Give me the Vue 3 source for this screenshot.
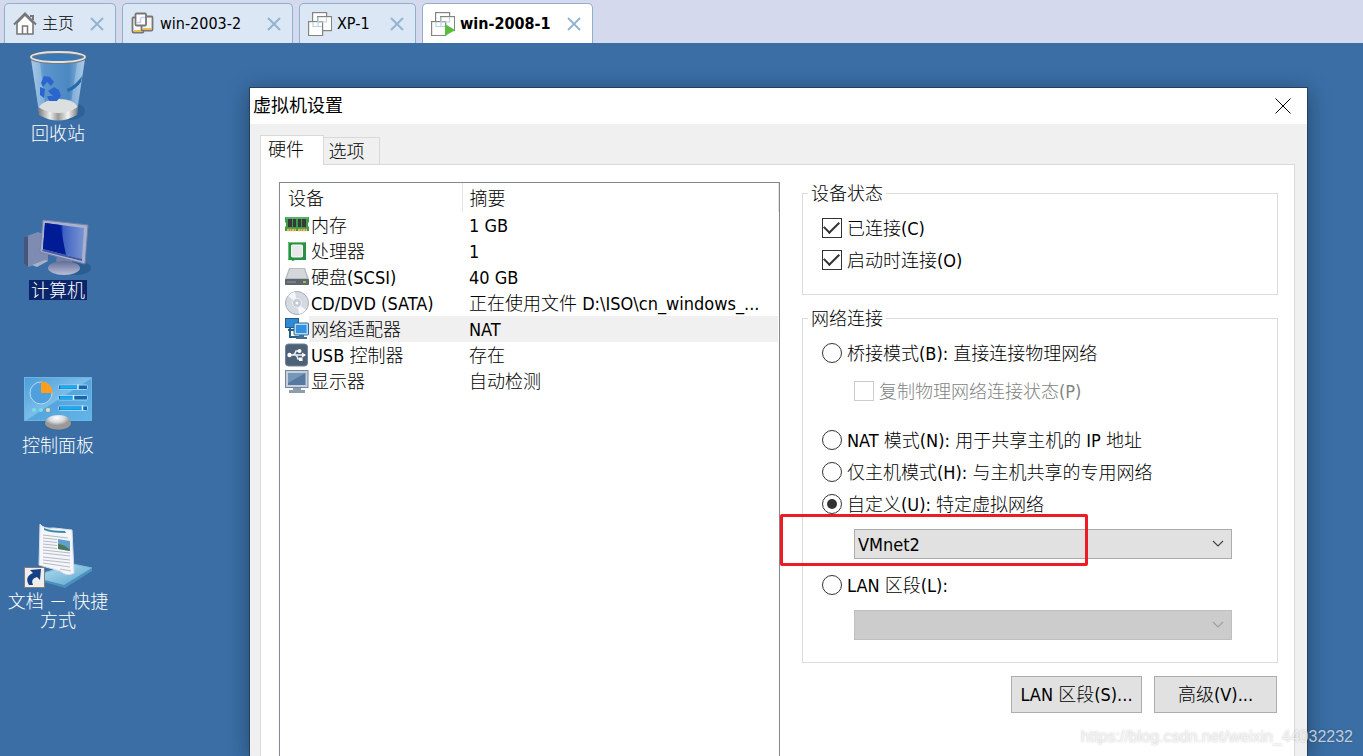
<script setup>
import { ref } from 'vue'

const tabs = [
  { icon: 'home', label: '主页', size: 'w-home' },
  { icon: 'team', label: 'win-2003-2', size: 'w-long' },
  { icon: 'vm', label: 'XP-1', size: 'w-short' },
  { icon: 'run', label: 'win-2008-1', size: 'w-long', active: true }
]

const devices = [
  { icon: 'memory', name: '内存', summary: '1 GB' },
  { icon: 'cpu', name: '处理器', summary: '1' },
  { icon: 'disk', name: '硬盘(SCSI)', summary: '40 GB' },
  { icon: 'cd', name: 'CD/DVD (SATA)', summary: '正在使用文件 D:\\ISO\\cn_windows_...' },
  { icon: 'net', name: '网络适配器', summary: 'NAT', selected: true },
  { icon: 'usb', name: 'USB 控制器', summary: '存在' },
  { icon: 'display', name: '显示器', summary: '自动检测' }
]

const connected = ref(true)
const connectAtStart = ref(true)
const replicate = ref(false)
const mode = ref('custom')
const vmnet = ref('VMnet2')
const lan = ref('')
</script>

<template>
  <div class="screen">
    <nav class="tabbar">
      <div v-for="t in tabs" :key="t.label" class="vtab" :class="[t.size, { active: t.active }]">
        <svg v-if="t.icon === 'home'" class="ticon" viewBox="0 0 24 24" fill="none" stroke="#777">
          <path d="M4 11V22H20V11L12 3Z" fill="#fff" stroke-width="1.6" />
          <path d="M1 12.500L12 1.500L23 12.500M17 4h3v4" stroke-width="2" />
          <path d="M9.500 22v-8h5v8" stroke-width="1.500" />
        </svg>
        <svg v-else-if="t.icon === 'team'" class="ticon" viewBox="0 0 24 24" stroke="#777" stroke-width="1.800">
          <rect x="1.500" y="5.500" width="11" height="15" rx="1" fill="#fff" />
          <path d="M3 19h9" stroke="#e6bc55" stroke-width="2" />
          <rect x="10.500" y="4.500" width="11" height="14" rx="1" fill="#f5f5f5" />
          <path d="M12 17h8.500" stroke="#e6bc55" stroke-width="2" />
          <rect x="4.500" y="1.500" width="10.500" height="12" rx="1" fill="#fff" />
          <path d="M5.500 10.500h4v-5M10 5.500h4" stroke="#c9cfea" fill="none" stroke-width="1.500" />
        </svg>
        <svg v-else class="ticon" viewBox="0 0 24 24" fill="none" stroke="#85857f" stroke-width="1.200">
          <rect x="4.600" y="0.600" width="14" height="14" fill="#fff" />
          <rect x="9.600" y="4.600" width="14" height="14" fill="#fff" />
          <rect x="0.600" y="9.600" width="14" height="14" fill="#fff" />
          <path d="M5 10v4.500h9M10 5v9.500M10 10h8.500V5" stroke="#bdd3e8" />
          <path v-if="t.icon === 'run'" d="M14 12L24 18L14 24Z" fill="#58bd3b" stroke="none" />
        </svg>
        <span class="tname">{{ t.label }}</span>
        <button class="tclose" :aria-label="'关闭 ' + t.label">
          <svg viewBox="0 0 14 14"><path d="M1 1L13 13M13 1L1 13" stroke="#8fb3d0" stroke-width="1.800" /></svg>
        </button>
      </div>
    </nav>

    <main class="desktop">
      <aside class="shortcuts">
        <div class="shortcut">
          <svg viewBox="0 51 116 72">
            <defs>
              <linearGradient id="glass"><stop offset="0" stop-color="#9fc6e8" /><stop offset=".25" stop-color="#5f9ad0" /><stop offset=".7" stop-color="#4d8ac5" /><stop offset="1" stop-color="#a5c9e6" /></linearGradient>
              <linearGradient id="metal"><stop offset="0" stop-color="#777" /><stop offset=".3" stop-color="#eee" /><stop offset=".5" stop-color="#999" /><stop offset=".75" stop-color="#f4f4f4" /><stop offset="1" stop-color="#777" /></linearGradient>
            </defs>
            <ellipse cx="70" cy="111" rx="15" ry="9" fill="#1f568d" opacity=".5" />
            <path d="M31 58L39 113Q58 122 77 113L85 58Z" fill="url(#glass)" opacity=".9" />
            <path d="M31 60L39 110L46 112L40 62ZM77 63L70 110L77 108L85 60Z" fill="#c8e0f3" opacity=".35" />
            <path d="M67 89Q76 85 82 76L81 82Q76 89 68 92Z" fill="#2868ac" />
            <path d="M39 107Q45 99 59 99T77 106L76 112Q58 120 40 112Z" fill="#dcdfe0" />
            <path d="M38 107Q58 119 78 107L77 115Q58 126 39 115Z" fill="url(#metal)" />
            <path d="M41 83L44 76L50 77L54 82L51 86L47 82L43 87ZM40 87L45 89L44 98L40 95ZM48 91L54 87L59 90L61 96L57 101H49L47 96H53Z" fill="#2b66cf" />
            <ellipse cx="58" cy="57.500" rx="27" ry="5" fill="#3979b5" stroke="#777" stroke-width="3" />
            <ellipse cx="58" cy="57" rx="27" ry="5" fill="none" stroke="#dfe3e6" stroke-width="1.800" />
          </svg>
          <span class="sname">回收站</span>
        </div>
        <div class="shortcut">
          <svg viewBox="0 207 116 72">
            <defs>
              <linearGradient id="scr"><stop offset="0" stop-color="#001e98" /><stop offset=".45" stop-color="#0b30ac" /><stop offset=".5" stop-color="#3f62c3" /><stop offset="1" stop-color="#7995d0" /></linearGradient>
              <linearGradient id="stand" x2="0" y2="1"><stop offset="0" stop-color="#626c97" /><stop offset="1" stop-color="#b9c0d8" /></linearGradient>
            </defs>
            <ellipse cx="76" cy="268" rx="15" ry="7" fill="#245688" opacity=".7" />
            <path d="M24 237L38 232L48 236V261L28 267L24 264Z" fill="#7e8cb1" />
            <path d="M24 237L28 236V267L24 264Z" fill="#46557e" />
            <path d="M32 265L45 260L48 261L37 267Z" fill="#a9b2cc" />
            <path d="M57 253L73 256L72 264H56Z" fill="#7480a5" />
            <ellipse cx="64" cy="268" rx="16" ry="7" fill="url(#stand)" />
            <path d="M43 220L88 225L85 264L40 252Z" fill="#aab1ce" stroke="#7480a8" />
            <path d="M45 223L84 228L82 259L43 249Z" fill="url(#scr)" />
            <path d="M45 223L60 225L66 255L43 249Z" fill="#001b95" />
            <path d="M43 249L82 259V261L42 251Z" fill="#4258a3" />
          </svg>
          <span class="sname picked">计算机</span>
        </div>
        <div class="shortcut">
          <svg viewBox="0 363 116 72">
            <defs>
              <linearGradient id="panel" x2="1" y2="1"><stop offset="0" stop-color="#4c9dda" /><stop offset=".5" stop-color="#7bbde9" /><stop offset=".52" stop-color="#56a5de" /><stop offset="1" stop-color="#62b6e8" /></linearGradient>
              <radialGradient id="knob" cx=".45" cy=".2"><stop offset="0" stop-color="#fff" /><stop offset=".6" stop-color="#d5d7d9" /><stop offset="1" stop-color="#999" /></radialGradient>
            </defs>
            <rect x="24.500" y="377.500" width="67" height="43" fill="url(#panel)" stroke="#6bb5e5" />
            <circle cx="41" cy="393" r="11" fill="#4ea1dc" stroke="#b6daf3" />
            <path d="M41 393V381.500A11.500 11.500 0 0 1 52.500 393Z" fill="#ff9d1e" />
            <g fill="#1766a9" stroke="#9dd1f3"><rect x="58.500" y="385" width="29" height="4.500" rx="1" /><rect x="58.500" y="395.500" width="29" height="4.500" rx="1" /><rect x="58.500" y="406" width="29" height="4.500" rx="1" /></g>
            <path d="M60 387.200h18M60 397.700h13M60 408.200h22" stroke="#19acf4" stroke-width="3" />
            <path d="M78 384.500v5M73.500 395v5M82.500 405.500v5" stroke="#d6f2ff" stroke-width="1.500" />
            <circle cx="34" cy="410" r="2" fill="#75e0e6" /><circle cx="41" cy="410" r="2" fill="#75e0e6" /><circle cx="48" cy="410" r="2" fill="#ffe0a0" />
            <ellipse cx="58" cy="424" rx="14" ry="7" fill="#3f668c" opacity=".5" />
            <path d="M45 424C45 418 51 415 59 415S71 419 71 424C68 432 48 431 45 424Z" fill="url(#knob)" />
          </svg>
          <span class="sname">控制面板</span>
        </div>
        <div class="shortcut">
          <svg viewBox="0 519 116 72">
            <defs><linearGradient id="base" x2="1" y2="1"><stop offset="0" stop-color="#b7e0f1" /><stop offset="1" stop-color="#58a3cf" /></linearGradient></defs>
            <path d="M40 574L73 564L92 568L64 585L44 580Z" fill="url(#base)" stroke="#79bbda" />
            <path d="M44 580L64 585L92 568V571L65 588L44 582Z" fill="#4b91bd" />
            <path d="M40 524Q43 529 54 528L72 530L74 573Q67 577 60 571L39 565Z" fill="#f4f6fa" stroke="#d4dceb" />
            <path d="M44 528Q50 531 65 531L66 533Q50 533 44 530Z" fill="#398ca0" />
            <path d="M43 535L68 538M43 538L57 539.500M43 541L57 542.500M43 544L57 545.500M43 547L57 548.500M43 550L70 553M43 553L70 556M43 557L70 560M43 560L70 563M43 563L70 567M60 569L71 571" stroke="#b4bac5" />
            <path d="M58 539L70 541V551L58 549Z" fill="#629fd1" /><path d="M58 544Q64 544 70 550V551L58 549Z" fill="#4d7954" />
            <rect x="24.500" y="567.500" width="20" height="20" fill="#eee" stroke="#817e79" />
            <path d="M29 585Q24 577 33 573L30 570L41 569L40 580L37 577Q30 579 33 585Z" fill="#173f86" />
          </svg>
          <span class="sname">文档 － 快捷方式</span>
        </div>
      </aside>

      <section class="dialog" aria-labelledby="dlg-title">
        <header class="titlebar">
          <h1 id="dlg-title">虚拟机设置</h1>
          <button class="dclose" aria-label="关闭"><svg viewBox="0 0 16 16"><path d="M.5 .5L15.500 15.500M15.500 .5L.5 15.500" stroke="#000" stroke-width="1" /></svg></button>
        </header>
        <div class="dbody">
          <div class="ptabs">
            <button class="ptab on">硬件</button>
            <button class="ptab">选项</button>
          </div>
          <div class="panel">
            <div class="list">
              <table>
                <thead><tr><th class="cname">设备</th><th>摘要</th></tr></thead>
                <tbody>
                  <tr v-for="d in devices" :key="d.name" :class="{ sel: d.selected }">
                    <td class="cname">
                      <div class="dev">
                        <svg class="dicon" viewBox="0 0 24 24">
                          <g v-if="d.icon === 'memory'">
                            <path d="M0 4H24V9L23 10V13L24 14V18H0V14L1 13V10L0 9Z" fill="#3f9b4c" />
                            <path d="M1 5H23" stroke="#79c982" /><path d="M3 6h4v8H3zM8 6h3v8H8zM13 6h3v8h-3zM17 6h4v8h-4z" fill="#333a37" />
                            <path d="M2 17h9M13 17h9" stroke="#f0b456" stroke-width="2.500" stroke-dasharray="2 .5" />
                          </g>
                          <g v-else-if="d.icon === 'cpu'">
                            <path d="M3 3H21V21H10L8 22L6 21H3Z" fill="#279241" /><path d="M3.500 20.500V3.500H20.500" fill="none" stroke="#6cc17a" />
                            <rect x="6.500" y="6" width="11" height="12" rx="1" fill="#e8e8e8" stroke="#f8f8f8" />
                          </g>
                          <g v-else-if="d.icon === 'disk'">
                            <path d="M4 3H20L24 14V20H0V14Z" fill="#b7bcc4" /><path d="M5 4H19L22 13H2Z" fill="#d4d7dc" />
                            <rect y="14" width="24" height="6" rx="1" fill="#60656d" /><path d="M2 17h9" stroke="#92969d" /><rect x="18" y="16" width="3" height="2" fill="#79d23e" />
                          </g>
                          <g v-else-if="d.icon === 'cd'">
                            <circle cx="12" cy="12" r="11.500" fill="#d5d9e1" stroke="#a7acb8" />
                            <path d="M12 12L3 5A11 11 0 0 1 10 1ZM12 12L21 19A11 11 0 0 1 14 23Z" fill="#f5f7fa" />
                            <circle cx="12" cy="12" r="4.500" fill="#c4cad4" stroke="#eef0f3" /><circle cx="12" cy="12" r="1.500" fill="#fff" />
                          </g>
                          <g v-else-if="d.icon === 'net'">
                            <rect x=".5" y="1.500" width="13" height="9" fill="#2d8bd5" stroke="#245b87" /><path d="M5 11v9h9M3 13h6" fill="none" stroke="#285d86" stroke-width="2" />
                            <rect x="9" y="6" width="14.500" height="12" rx="1" fill="#b5d9f5" stroke="#28679b" /><rect x="11" y="8" width="10.500" height="8" fill="#2f91e0" />
                            <path d="M14 18h5v2h3v2H11v-2h3Z" fill="#456f91" />
                          </g>
                          <g v-else-if="d.icon === 'usb'">
                            <rect x=".5" y="1" width="22" height="22" rx="3" fill="#4d6177" stroke="#708399" />
                            <g fill="none" stroke="#e6eef6" stroke-width="1.500"><path d="M3 12H20M7 12Q10 12 11 8H14M10 12Q12 12 13 16H16" /></g>
                            <circle cx="4.500" cy="12" r="2.200" fill="#fff" /><circle cx="14.500" cy="8" r="2" fill="#fff" /><rect x="14" y="14.500" width="3.500" height="3.500" fill="#fff" /><path d="M17 9.500L21 12L17 14.500Z" fill="#fff" />
                          </g>
                          <g v-else>
                            <rect x=".5" y="1.500" width="22.500" height="17" fill="#c6d0dc" stroke="#74879e" /><rect x="3" y="4" width="17.500" height="12" fill="#58799f" />
                            <path d="M3 4H20.500L3 14Z" fill="#7797b9" /><path d="M8 19h8v2h4v3H4v-3h4Z" fill="#8c9dad" />
                          </g>
                        </svg>
                        <span class="dname">{{ d.name }}</span>
                      </div>
                    </td>
                    <td class="csum">{{ d.summary }}</td>
                  </tr>
                </tbody>
              </table>
            </div>

            <div class="settings">
              <fieldset>
                <legend>设备状态</legend>
                <div class="group status">
                  <label class="opt"><input v-model="connected" type="checkbox" /><span>已连接(C)</span></label>
                  <label class="opt"><input v-model="connectAtStart" type="checkbox" /><span>启动时连接(O)</span></label>
                </div>
              </fieldset>
              <fieldset>
                <legend>网络连接</legend>
                <div class="group network">
                  <label class="opt"><input v-model="mode" type="radio" name="mode" value="bridge" /><span>桥接模式(B): 直接连接物理网络</span></label>
                  <label class="opt sub"><input v-model="replicate" type="checkbox" disabled /><span>复制物理网络连接状态(P)</span></label>
                  <label class="opt"><input v-model="mode" type="radio" name="mode" value="nat" /><span>NAT 模式(N): 用于共享主机的 IP 地址</span></label>
                  <label class="opt"><input v-model="mode" type="radio" name="mode" value="host" /><span>仅主机模式(H): 与主机共享的专用网络</span></label>
                  <label class="opt"><input v-model="mode" type="radio" name="mode" value="custom" /><span>自定义(U): 特定虚拟网络</span></label>
                  <div class="pick">
                    <select v-model="vmnet" aria-label="特定虚拟网络"><option>VMnet2</option></select>
                    <svg class="chev" viewBox="0 0 12 7"><path d="M1 1L6 6L11 1" fill="none" stroke="#444" stroke-width="1.200" /></svg>
                    <div class="mark"></div>
                  </div>
                  <label class="opt lan"><input v-model="mode" type="radio" name="mode" value="lan" /><span>LAN 区段(L):</span></label>
                  <div class="pick">
                    <select v-model="lan" disabled aria-label="LAN 区段"><option value=""></option></select>
                    <svg class="chev" viewBox="0 0 12 7"><path d="M1 1L6 6L11 1" fill="none" stroke="#a0a0a0" stroke-width="1.200" /></svg>
                  </div>
                </div>
              </fieldset>
              <div class="actions">
                <button class="btn wide">LAN 区段(S)...</button>
                <button class="btn">高级(V)...</button>
              </div>
            </div>
          </div>
        </div>
      </section>
    </main>
    <div class="watermark">https://blog.csdn.net/weixin_44032232</div>
  </div>
</template>

<style>
body { margin: 0; overflow: hidden; }
</style>

<style scoped>
* { box-sizing: border-box; }
.screen {
  position: relative;
  display: flex;
  flex-direction: column;
  height: 100vh;
  overflow: hidden;
  background: #3a6ea5;
  color: #000;
  font: 300 18px/22px "DejaVu Sans Condensed", "Noto Sans CJK SC", sans-serif;
}
button, select { font: inherit; color: inherit; padding: 0; margin: 0; border: 0; background: none; }
svg { display: block; }
.tabbar { display: flex; gap: 6px; height: 43px; padding: 3px 4px 0; background: #d4d9ed; flex: none; }
.vtab { display: flex; align-items: center; padding: 0 11px 0 8px; border: 1px solid #8fb0ca; border-bottom: 0; border-radius: 5px 5px 0 0; background: #dbe7f5; font-size: 16px; }
.w-home { width: 112px; }
.w-long { width: 171px; }
.w-short { width: 117px; }
.vtab.active { background: #fff; font-weight: 700; }
.ticon { width: 24px; height: 24px; margin-right: 5px; flex: none; }
.tname { padding-top: 1px; white-space: nowrap; }
.tclose { width: 14px; height: 14px; margin-left: auto; flex: none; }
.desktop { display: flex; flex: 1; min-height: 0; }
.shortcuts { width: 116px; flex: none; color: #fff; }
.shortcut { display: flex; flex-direction: column; align-items: center; height: 156px; padding-top: 8px; }
.shortcut svg { width: 116px; height: 72px; margin-bottom: 1px; flex: none; }
.sname { max-width: 108px; padding: 0 2px; line-height: 19px; text-align: center; }
.picked { padding-top: 1px; background: #0a246a; }
.dialog { display: flex; flex-direction: column; flex: 1; min-width: 0; margin: 44px 55px 0 133px; border: 1px solid #24425f; border-bottom: 0; background: #f0f0f0; box-shadow: 0 4px 20px rgba(0, 0, 0, .35); }
.titlebar { display: flex; align-items: center; justify-content: space-between; height: 36px; padding: 0 16px 0 3px; background: #fff; flex: none; }
h1 { margin: 0; font-size: 18px; font-weight: 400; line-height: 22px; }
.dclose, .dclose svg { width: 16px; height: 16px; }
.dbody { display: flex; flex-direction: column; flex: 1; padding: 11px 12px 0 10px; }
.ptabs { display: flex; align-items: flex-end; height: 30px; flex: none; }
.ptab { width: 56px; height: 28px; border: 1px solid #d9d9d9; border-left: 0; padding: 2px 10px 0 0; }
.ptab.on { position: relative; width: 64px; height: 30px; border-left: 1px solid #d9d9d9; border-bottom: 0; padding: 0 12px 2px 0; background: #fff; }
.panel { display: flex; flex: 1; gap: 22px; margin-top: -1px; border: 1px solid #d9d9d9; border-bottom: 0; padding: 17px 16px 0 18px; background: #fff; }
.list { flex: 500 1 0; min-width: 0; border: 1px solid #828790; border-bottom: 0; }
table { width: 100%; border-collapse: collapse; table-layout: fixed; }
th { height: 29px; padding: 3px 0 0 7px; text-align: left; font-weight: inherit; border-right: 1px solid #e2e2e2; }
th.cname { width: 182px; padding-left: 8px; }
td { height: 26px; padding: 0; white-space: nowrap; }
td.csum { padding: 2px 0 0 7px; }
.dev { display: flex; height: 26px; padding-left: 5px; align-items: center; }
.dicon { width: 24px; height: 24px; flex: none; }
.dname { flex: 1; line-height: 24px; padding: 2px 0 0 2px; }
.sel .dname, .sel .csum { background: #f0f0f0; }
.settings { flex: 477 1 0; min-width: 0; }
fieldset { margin: 0 0 12px; padding: 0; min-width: 0; border: 1px solid #dcdcdc; }
legend { height: 22px; margin-left: 5px; padding: 1px 3px 0; line-height: 22px; }
.group { padding: 8px 45px 0 19px; }
.status { padding-bottom: 18px; }
.network { padding-bottom: 22px; }
.opt { display: flex; align-items: center; height: 32px; gap: 5px; white-space: nowrap; }
.opt span { padding-top: 2px; }
.opt input { appearance: none; width: 20px; height: 20px; margin: 0; border: 1px solid #333; background: #fff; flex: none; display: grid; place-items: center; }
.opt input[type="radio"] { border-radius: 50%; }
.opt input[type="radio"]:checked::after { content: ""; width: 10px; height: 10px; border-radius: 50%; background: #333; }
.opt input[type="checkbox"]:checked::after { content: ""; width: 13px; height: 7px; margin-bottom: 5px; border: solid #333; border-width: 0 0 2px 2px; transform: rotate(-45deg); }
.opt.sub { margin: 6px 0 17px 32px; color: #838383; }
.opt.sub input { border-color: #ccc; }
.opt.lan { margin-top: 10px; }
.pick { position: relative; margin: 9px 0 0 32px; }
.pick select { display: block; appearance: none; width: 100%; height: 30px; padding: 2px 3px 0; border: 1px solid #adadad; border-radius: 0; background: #e1e1e1; }
.pick select:disabled { background: #ccc; border-color: #bfbfbf; opacity: 1; }
.chev { position: absolute; right: 8px; top: 11px; width: 12px; height: 7px; pointer-events: none; }
.mark { position: absolute; left: -74px; top: -15px; width: 308px; height: 52px; border: 3px solid #ed1c24; border-radius: 2px; pointer-events: none; }
.actions { display: flex; justify-content: flex-end; gap: 12px; padding: 1px 1px 0 0; }
.btn { width: 123px; height: 37px; border: 1px solid #adadad; background: #e1e1e1; white-space: nowrap; }
.btn.wide { width: 131px; }
.watermark { position: absolute; right: 10px; bottom: 8px; font: 400 16px/22px "Liberation Sans", Arial, sans-serif; color: rgba(255, 255, 255, .7); text-shadow: 0 0 2px rgba(0, 0, 0, .25); }
</style>
